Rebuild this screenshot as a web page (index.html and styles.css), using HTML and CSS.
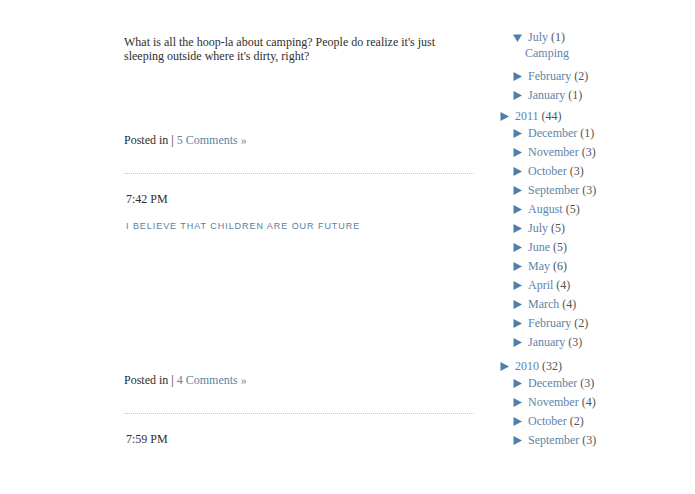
FILE: index.html
```html
<!DOCTYPE html>
<html lang="en">
<head>
<meta charset="utf-8">
<title>Blog</title>
<link rel="stylesheet" href="styles.css">
</head>
<body>
<div class="page">
  <div class="main">
    <div class="post">
      <div class="post-body first">
        <p>What is all the hoop-la about camping? People do realize it's just sleeping outside where it's dirty, right?</p>
      </div>
      <div class="post-footer">Posted in | <a href="#">5 Comments »</a></div>
    </div>
    <div class="post">
      <div class="date">7:42 PM</div>
      <h3 class="title"><a href="#">I believe that children are our future</a></h3>
      <div class="post-body second"></div>
      <div class="post-footer">Posted in | <a href="#">4 Comments »</a></div>
    </div>
    <div class="post">
      <div class="date">7:59 PM</div>
    </div>
  </div>

  <div class="sidebar">
    <ul class="months top">
      <li class="month open">
        <div class="row"><svg class="tri" width="9" height="9" viewBox="0 0 9 9"><path d="M0 1.5h9L4.5 9z"/></svg><span class="label"><a href="#">July</a> <span class="count">(1)</span></span></div>
        <ul class="posts"><li><a href="#">Camping</a></li></ul>
      </li>
      <li class="month"><div class="row"><svg class="tri" width="9" height="9" viewBox="0 0 9 9"><path d="M0.5 0L9 4.5L0.5 9z"/></svg><span class="label"><a href="#">February</a> <span class="count">(2)</span></span></div></li>
      <li class="month"><div class="row"><svg class="tri" width="9" height="9" viewBox="0 0 9 9"><path d="M0.5 0L9 4.5L0.5 9z"/></svg><span class="label"><a href="#">January</a> <span class="count">(1)</span></span></div></li>
    </ul>

    <div class="year">
      <div class="year-row"><svg class="tri" width="9" height="9" viewBox="0 0 9 9"><path d="M0.5 0L9 4.5L0.5 9z"/></svg><span class="label"><a href="#">2011</a> <span class="count">(44)</span></span></div>
      <ul class="months">
        <li class="month"><div class="row"><svg class="tri" width="9" height="9" viewBox="0 0 9 9"><path d="M0.5 0L9 4.5L0.5 9z"/></svg><span class="label"><a href="#">December</a> <span class="count">(1)</span></span></div></li>
        <li class="month"><div class="row"><svg class="tri" width="9" height="9" viewBox="0 0 9 9"><path d="M0.5 0L9 4.5L0.5 9z"/></svg><span class="label"><a href="#">November</a> <span class="count">(3)</span></span></div></li>
        <li class="month"><div class="row"><svg class="tri" width="9" height="9" viewBox="0 0 9 9"><path d="M0.5 0L9 4.5L0.5 9z"/></svg><span class="label"><a href="#">October</a> <span class="count">(3)</span></span></div></li>
        <li class="month"><div class="row"><svg class="tri" width="9" height="9" viewBox="0 0 9 9"><path d="M0.5 0L9 4.5L0.5 9z"/></svg><span class="label"><a href="#">September</a> <span class="count">(3)</span></span></div></li>
        <li class="month"><div class="row"><svg class="tri" width="9" height="9" viewBox="0 0 9 9"><path d="M0.5 0L9 4.5L0.5 9z"/></svg><span class="label"><a href="#">August</a> <span class="count">(5)</span></span></div></li>
        <li class="month"><div class="row"><svg class="tri" width="9" height="9" viewBox="0 0 9 9"><path d="M0.5 0L9 4.5L0.5 9z"/></svg><span class="label"><a href="#">July</a> <span class="count">(5)</span></span></div></li>
        <li class="month"><div class="row"><svg class="tri" width="9" height="9" viewBox="0 0 9 9"><path d="M0.5 0L9 4.5L0.5 9z"/></svg><span class="label"><a href="#">June</a> <span class="count">(5)</span></span></div></li>
        <li class="month"><div class="row"><svg class="tri" width="9" height="9" viewBox="0 0 9 9"><path d="M0.5 0L9 4.5L0.5 9z"/></svg><span class="label"><a href="#">May</a> <span class="count">(6)</span></span></div></li>
        <li class="month"><div class="row"><svg class="tri" width="9" height="9" viewBox="0 0 9 9"><path d="M0.5 0L9 4.5L0.5 9z"/></svg><span class="label"><a href="#">April</a> <span class="count">(4)</span></span></div></li>
        <li class="month"><div class="row"><svg class="tri" width="9" height="9" viewBox="0 0 9 9"><path d="M0.5 0L9 4.5L0.5 9z"/></svg><span class="label"><a href="#">March</a> <span class="count">(4)</span></span></div></li>
        <li class="month"><div class="row"><svg class="tri" width="9" height="9" viewBox="0 0 9 9"><path d="M0.5 0L9 4.5L0.5 9z"/></svg><span class="label"><a href="#">February</a> <span class="count">(2)</span></span></div></li>
        <li class="month"><div class="row"><svg class="tri" width="9" height="9" viewBox="0 0 9 9"><path d="M0.5 0L9 4.5L0.5 9z"/></svg><span class="label"><a href="#">January</a> <span class="count">(3)</span></span></div></li>
      </ul>
    </div>

    <div class="year later">
      <div class="year-row"><svg class="tri" width="9" height="9" viewBox="0 0 9 9"><path d="M0.5 0L9 4.5L0.5 9z"/></svg><span class="label"><a href="#">2010</a> <span class="count">(32)</span></span></div>
      <ul class="months">
        <li class="month"><div class="row"><svg class="tri" width="9" height="9" viewBox="0 0 9 9"><path d="M0.5 0L9 4.5L0.5 9z"/></svg><span class="label"><a href="#">December</a> <span class="count">(3)</span></span></div></li>
        <li class="month"><div class="row"><svg class="tri" width="9" height="9" viewBox="0 0 9 9"><path d="M0.5 0L9 4.5L0.5 9z"/></svg><span class="label"><a href="#">November</a> <span class="count">(4)</span></span></div></li>
        <li class="month"><div class="row"><svg class="tri" width="9" height="9" viewBox="0 0 9 9"><path d="M0.5 0L9 4.5L0.5 9z"/></svg><span class="label"><a href="#">October</a> <span class="count">(2)</span></span></div></li>
        <li class="month"><div class="row"><svg class="tri" width="9" height="9" viewBox="0 0 9 9"><path d="M0.5 0L9 4.5L0.5 9z"/></svg><span class="label"><a href="#">September</a> <span class="count">(3)</span></span></div></li>
      </ul>
    </div>
  </div>
</div>
</body>
</html>
```

FILE: styles.css
```css
html, body {
  margin: 0;
  padding: 0;
  background: #fff;
}
body {
  font-family: "Liberation Serif", "DejaVu Serif", serif;
  font-size: 12px;
  color: #2e2e2e;
}
a {
  color: #5e84a8;
  text-decoration: none;
}
ul {
  list-style: none;
  margin: 0;
  padding: 0;
}
.page {
  display: flex;
  height: 455px;
  overflow: hidden;
  padding-left: 124px;
}
.main {
  width: 350px;
  flex: none;
  padding-top: 35px;
}
.post-body p {
  margin: 0;
  line-height: 14px;
}
.post-body.first {
  height: 98px;
}
.post-body.second {
  height: 140px;
}
.post-footer {
  line-height: 14px;
  padding-bottom: 26px;
  border-bottom: 1px dotted #c8c8c8;
}
.date {
  margin-top: 18px;
  padding-left: 2px;
  line-height: 14px;
}
.title {
  margin: 13px 0 0;
  padding-left: 2px;
  font-family: "Liberation Sans", "DejaVu Sans", sans-serif;
  font-weight: normal;
  font-size: 9px;
  letter-spacing: 0.95px;
  text-transform: uppercase;
  line-height: 14px;
}
.title a {
  color: #5a80a2;
}
.sidebar {
  margin-left: 26px;
  padding-top: 28px;
  width: 160px;
  flex: none;
}
.tri {
  fill: #4f7ea8;
  flex: none;
}
.row, .year-row {
  display: flex;
  align-items: center;
  white-space: nowrap;
}
.row {
  line-height: 19px;
  padding-left: 13px;
}
.row .tri,
.year-row .tri {
  margin-right: 6px;
}
.posts {
  padding-left: 25px;
  margin-bottom: 8px;
}
.posts li {
  line-height: 12px;
}
.year {
  margin-top: 4px;
}
.year.later {
  margin-top: 7px;
}
.year-row {
  line-height: 15px;
}
.count {
  color: #555;
}
```
